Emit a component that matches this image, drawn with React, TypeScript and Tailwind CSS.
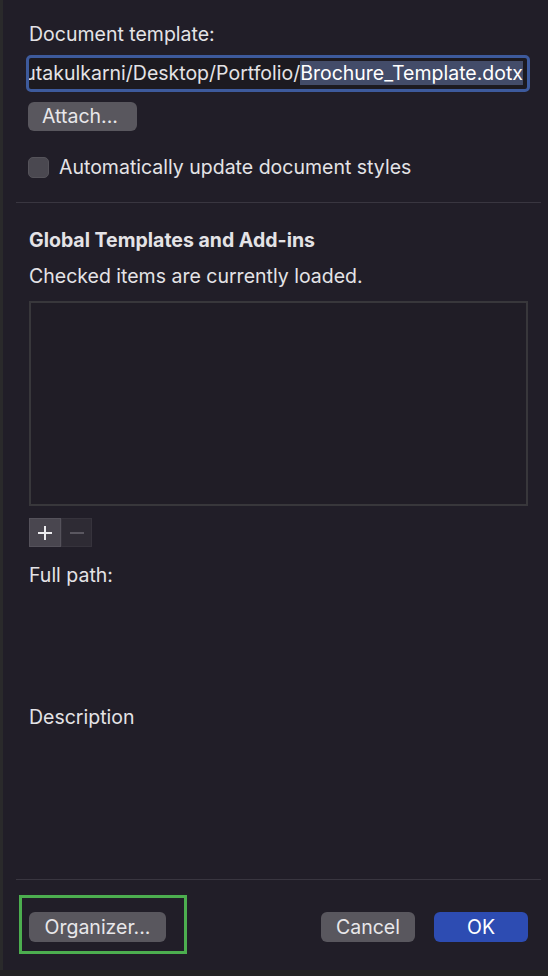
import React from "react";

const font = { fontFamily: "Inter, 'Noto Sans', sans-serif" };

const App: React.FC = () => {
  return (
    <div className="w-[548px] h-[976px] flex flex-col bg-[#252525] text-[#e4e3e6] text-[19.5px]" style={font}>
      <div className="flex flex-1">
        {/* window edge */}
        <div className="w-[3px] bg-[#2a2a2b]" />

        <div className="flex-1 bg-[#211e28] flex flex-col">
          <div className="ml-[26px] mt-[23px] leading-[22px]">Document template:</div>

          {/* path field */}
          <div className="ml-[23px] mt-[10px] w-[504px] h-[37px] rounded-[5px] border-[3px] border-[#3d5a9c] bg-[#1c1a20] flex items-center justify-end overflow-hidden pr-[4px]">
            <span className="whitespace-nowrap leading-[27px]">
              /Users/amrutakulkarni/Desktop/Portfolio/
              <span className="bg-[#434c69] text-white">Brochure_Template.dotx</span>
            </span>
          </div>

          <button className="ml-[25px] mt-[10px] w-[109px] h-[29px] rounded-[6px] bg-[#59575e] leading-[29px] text-[#e8e7ea] text-left pl-[14px]">
            Attach...
          </button>

          <label className="ml-[25px] mt-[25px] flex items-center gap-[10px] leading-[22px]">
            <span className="w-[21px] h-[21px] rounded-[5px] bg-[#4a4850] border border-[#55535a]" />
            Automatically update document styles
          </label>

          <div className="ml-[13px] mt-[24px] w-[525px] h-px bg-[#393640]" />

          <div className="ml-[26px] mt-[26px] font-bold leading-[22px]">Global Templates and Add-ins</div>
          <div className="ml-[26px] mt-[14px] leading-[22px]">Checked items are currently loaded.</div>

          {/* templates list */}
          <div className="ml-[26px] mt-[14px] w-[499px] h-[205px] border-2 border-[#38373b] bg-[#201d26]" />

          <div className="ml-[26px] mt-[12px] flex">
            <button className="w-[32px] h-[29px] bg-[#49464f] border border-[#55525b] flex items-center justify-center">
              <svg width="18" height="18" viewBox="0 0 18 18">
                <path d="M9 2v14M2 9h14" stroke="#ececef" strokeWidth="2" />
              </svg>
            </button>
            <button className="w-[31px] h-[29px] bg-[#2e2b34] border border-[#36333c] flex items-center justify-center">
              <svg width="18" height="18" viewBox="0 0 18 18">
                <path d="M2 9h14" stroke="#5a5760" strokeWidth="2" />
              </svg>
            </button>
          </div>

          <div className="ml-[26px] mt-[17px] leading-[22px]">Full path:</div>
          <div className="ml-[26px] mt-[120px] leading-[22px]">Description</div>

          <div className="ml-[13px] mt-[151px] w-[525px] h-px bg-[#393640]" />

          {/* footer */}
          <div className="mt-[32px] flex items-center">
            <div className="relative ml-[26px]">
              <button className="w-[137px] h-[30px] rounded-[6px] bg-[#59575e] text-[#e8e7ea] leading-[30px]">
                Organizer...
              </button>
              <div className="absolute left-[-10px] top-[-17px] w-[168px] h-[59px] border-[3px] border-[#4cae4f]" />
            </div>
            <button className="ml-[155px] w-[94px] h-[30px] rounded-[6px] bg-[#59575e] text-[#e8e7ea] leading-[30px]">
              Cancel
            </button>
            <button className="ml-[19px] w-[94px] h-[30px] rounded-[6px] bg-[#2d4cb2] text-white leading-[30px]">
              OK
            </button>
          </div>
        </div>
      </div>
      <div className="h-[6px] bg-[#252525]" />
    </div>
  );
};

export default App;
